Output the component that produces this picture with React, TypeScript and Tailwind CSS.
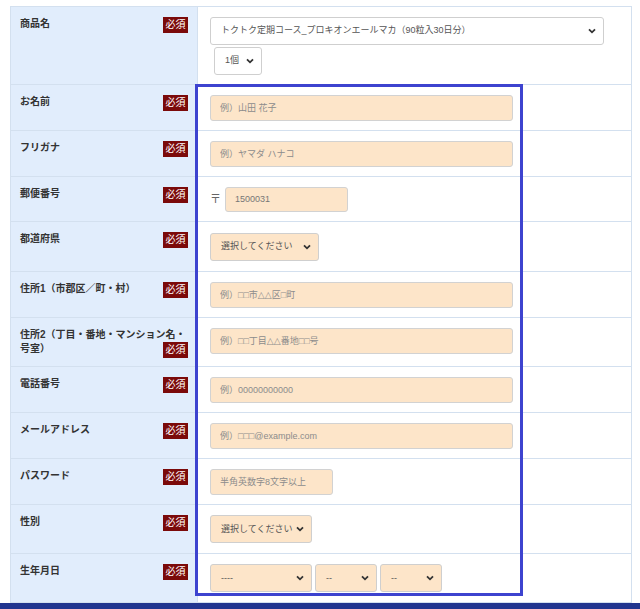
import React from 'react';

const FONT = "font-['Liberation_Sans','Noto_Sans_CJK_JP',sans-serif]";

function Chevron() {
  return (
    <svg width="8" height="6" viewBox="0 0 8 6" className="shrink-0">
      <path d="M1 1.3 L4 4.3 L7 1.3" fill="none" stroke="#333" strokeWidth="1.8" />
    </svg>
  );
}

function FakeSelect({ text, width, white = false }: { text: string; width: string; white?: boolean }) {
  return (
    <div
      className={`${width} h-[28px] inline-flex items-center justify-between pl-[10px] pr-[7px] border border-[#cfcfcf] rounded-[3px] text-[9px] text-[#555] ${
        white ? 'bg-white' : 'bg-[#fde5c9]'
      }`}
    >
      <span>{text}</span>
      <Chevron />
    </div>
  );
}

function TextInput({ placeholder, width }: { placeholder: string; width: string }) {
  return (
    <input
      type="text"
      placeholder={placeholder}
      className={`${width} h-[26px] block pl-[9px] border border-[#d2d2d2] rounded-[3px] bg-[#fde5c9] text-[9px] text-[#555] placeholder:text-[#8c8c8c] outline-none font-['Liberation_Sans','DejaVu_Sans','Noto_Sans_CJK_JP',sans-serif]`}
    />
  );
}

function Label({ children }: { children: React.ReactNode }) {
  return (
    <th className="w-[187px] align-top text-left bg-[#e1edfc] border border-[#d3e0ef] pt-[10px] pb-[8px] pl-[9px] pr-[9px] text-[10px] leading-[14px] font-bold text-[#333]">
      {children}
      <span className="float-right h-[16px] w-[25px] bg-[#7b0a0a] text-white text-[10px] leading-[16px] font-normal text-center">
        必須
      </span>
    </th>
  );
}

function Value({ children, tall = false }: { children: React.ReactNode; tall?: boolean }) {
  return (
    <td
      className={`align-top bg-white border border-[#d3e0ef] pt-[10px] pl-[12px] pr-[12px] ${
        tall ? 'pb-[10px]' : 'pb-[9px]'
      }`}
    >
      {children}
    </td>
  );
}

export default function App() {
  return (
    <div className={`relative w-[640px] min-h-[609px] bg-white ${FONT}`}>
      <div className="pt-[6px] pl-[10px]">
        <table className="w-[622px] border-collapse table-fixed">
          <tbody>
            <tr>
              <Label>商品名</Label>
              <Value>
                <div className="flex flex-col items-start gap-[1px]">
                  <FakeSelect text="トクトク定期コース_プロキオンエールマカ（90粒入30日分）" width="w-[394px]" white />
                  <div className="pl-[4px]">
                    <FakeSelect text="1個" width="w-[48px]" white />
                  </div>
                </div>
              </Value>
            </tr>
            <tr>
              <Label>お名前</Label>
              <Value>
                <TextInput placeholder="例）山田 花子" width="w-[303px]" />
              </Value>
            </tr>
            <tr>
              <Label>フリガナ</Label>
              <Value>
                <TextInput placeholder="例）ヤマダ ハナコ" width="w-[303px]" />
              </Value>
            </tr>
            <tr>
              <Label>郵便番号</Label>
              <Value>
                <div className="flex items-center gap-[4px] h-[25px]">
                  <span className="text-[11px] text-[#666]">〒</span>
                  <input
                    type="text"
                    placeholder="1500031"
                    className="w-[123px] h-[25px] pl-[9px] border border-[#d2d2d2] rounded-[3px] bg-[#fde5c9] text-[9px] placeholder:text-[#777] outline-none"
                  />
                </div>
              </Value>
            </tr>
            <tr>
              <Label>都道府県</Label>
              <Value tall>
                <FakeSelect text="選択してください" width="w-[109px]" />
              </Value>
            </tr>
            <tr>
              <Label>住所1（市郡区／町・村）</Label>
              <Value>
                <TextInput placeholder="例）□□市△△区□町" width="w-[303px]" />
              </Value>
            </tr>
            <tr>
              <Label>住所2（丁目・番地・マンション名・号室）</Label>
              <Value>
                <TextInput placeholder="例）□□丁目△△番地□□号" width="w-[303px]" />
              </Value>
            </tr>
            <tr>
              <Label>電話番号</Label>
              <Value>
                <TextInput placeholder="例）00000000000" width="w-[303px]" />
              </Value>
            </tr>
            <tr>
              <Label>メールアドレス</Label>
              <Value>
                <TextInput placeholder="例）□□□@example.com" width="w-[303px]" />
              </Value>
            </tr>
            <tr>
              <Label>パスワード</Label>
              <Value>
                <TextInput placeholder="半角英数字8文字以上" width="w-[123px]" />
              </Value>
            </tr>
            <tr>
              <Label>性別</Label>
              <Value tall>
                <FakeSelect text="選択してください" width="w-[102px]" />
              </Value>
            </tr>
            <tr>
              <Label>生年月日</Label>
              <Value tall>
                <div className="flex gap-[3px]">
                  <FakeSelect text="----" width="w-[102px]" />
                  <FakeSelect text="--" width="w-[62px]" />
                  <FakeSelect text="--" width="w-[62px]" />
                </div>
              </Value>
            </tr>
          </tbody>
        </table>
      </div>
      <div className="h-[60px] bg-[#21358f]" />
      {/* annotation frame */}
      <div className="absolute left-[195px] top-[84px] w-[328px] h-[512px] border-[3px] border-[#3d43cf] pointer-events-none" />
    </div>
  );
}
